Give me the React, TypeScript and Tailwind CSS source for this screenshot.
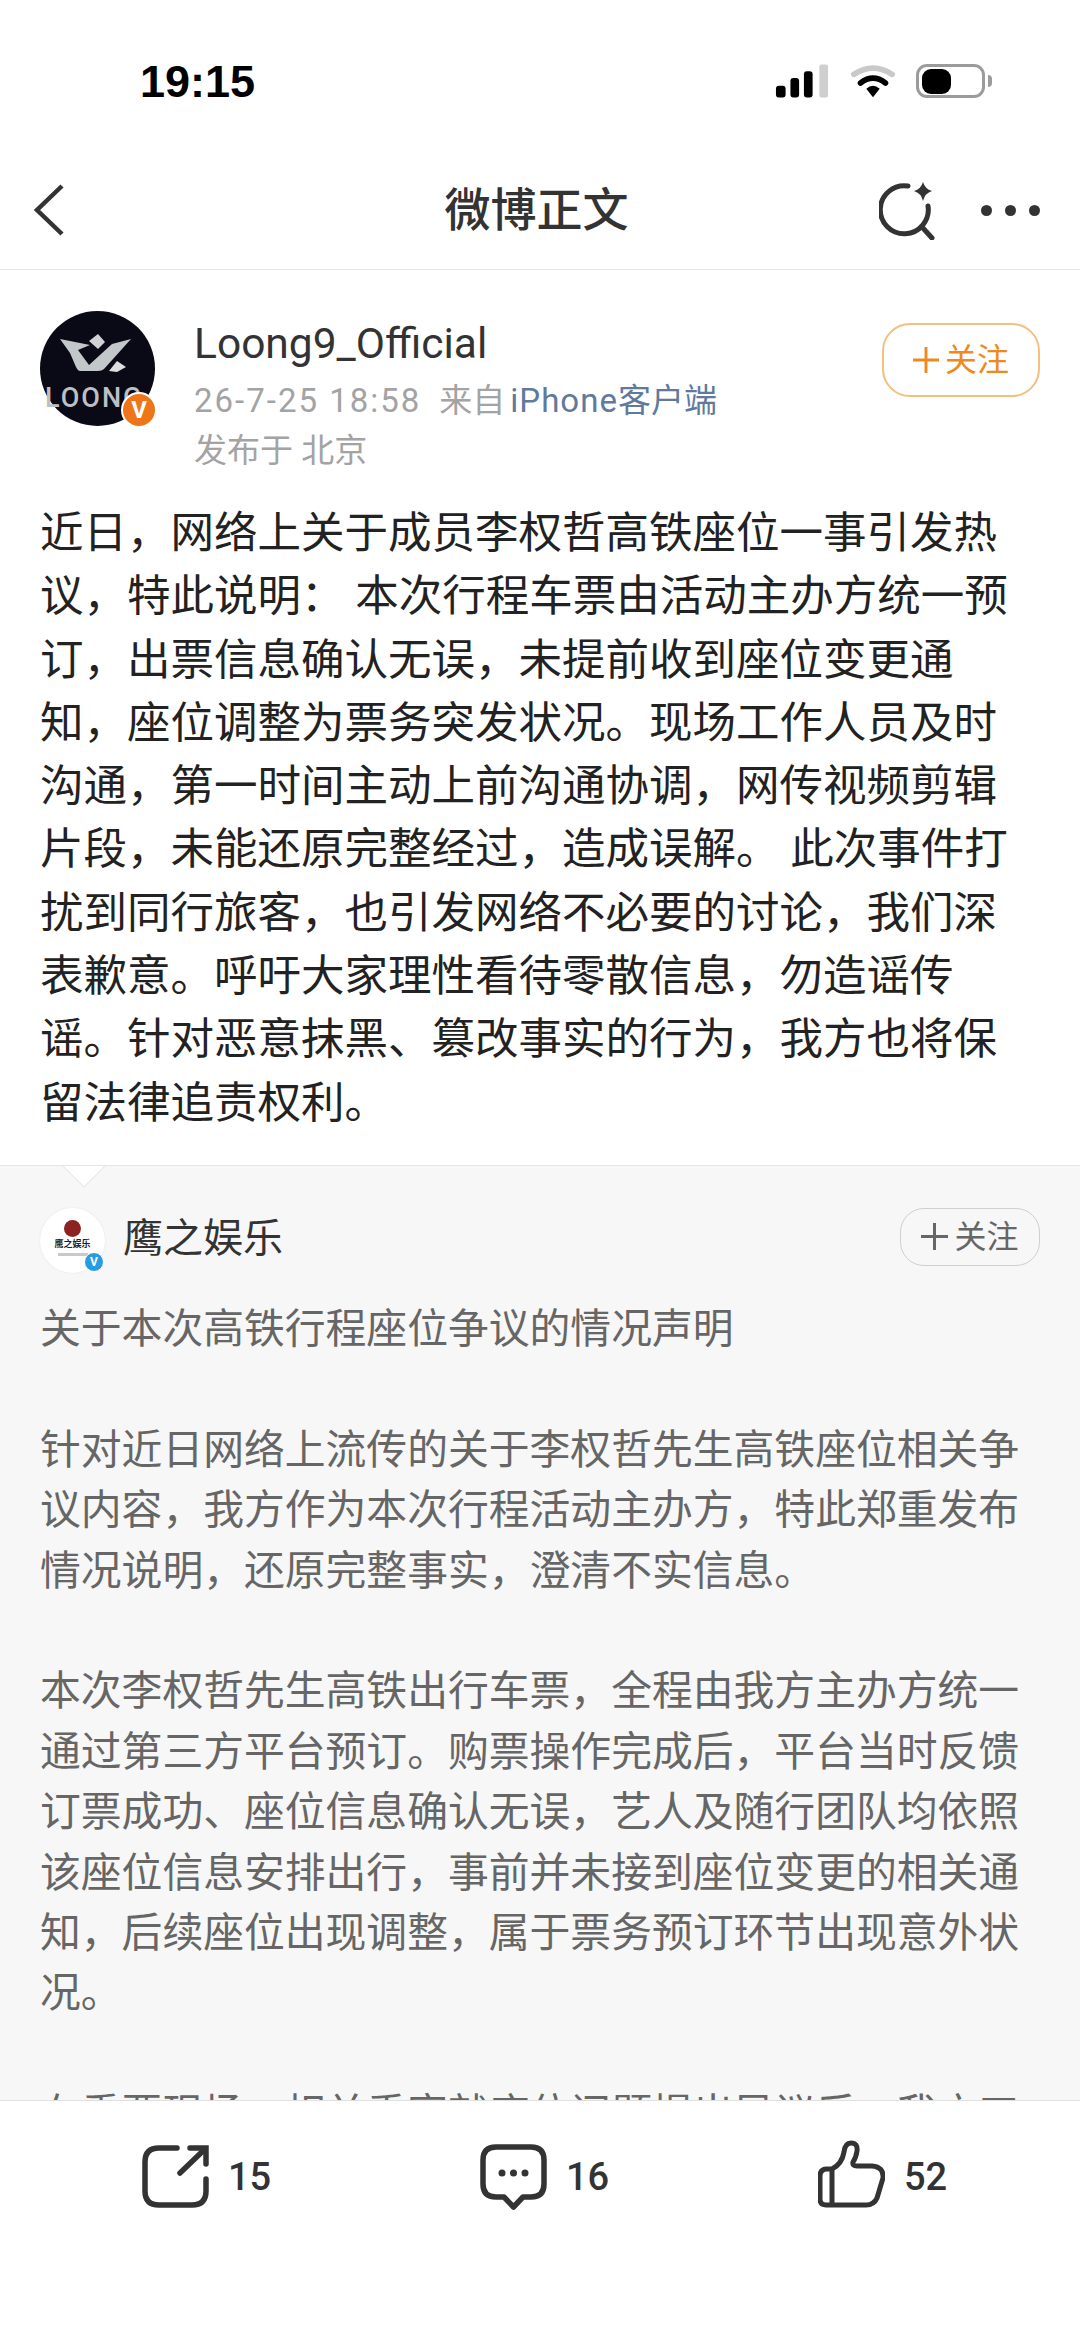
import { ReactNode } from 'react';

const postText = `近日，网络上关于成员李权哲高铁座位一事引发热
议，特此说明： 本次行程车票由活动主办方统一预
订，出票信息确认无误，未提前收到座位变更通
知，座位调整为票务突发状况。现场工作人员及时
沟通，第一时间主动上前沟通协调，网传视频剪辑
片段，未能还原完整经过，造成误解。 此次事件打
扰到同行旅客，也引发网络不必要的讨论，我们深
表歉意。呼吁大家理性看待零散信息，勿造谣传
谣。针对恶意抹黑、篡改事实的行为，我方也将保
留法律追责权利。`;

const quotedText = `关于本次高铁行程座位争议的情况声明

针对近日网络上流传的关于李权哲先生高铁座位相关争
议内容，我方作为本次行程活动主办方，特此郑重发布
情况说明，还原完整事实，澄清不实信息。

本次李权哲先生高铁出行车票，全程由我方主办方统一
通过第三方平台预订。购票操作完成后，平台当时反馈
订票成功、座位信息确认无误，艺人及随行团队均依照
该座位信息安排出行，事前并未接到座位变更的相关通
知，后续座位出现调整，属于票务预订环节出现意外状
况。

在重要现场，相关乘客就座位问题提出异议后，我方工`;

function StatusIcons() {
  return (
    <div className="flex items-center">
      <svg width="54" height="34" viewBox="0 0 56 34" fill="#000">
        <rect x="1" y="22" width="10" height="12" rx="3" />
        <rect x="16" y="14" width="9" height="20" rx="3" />
        <rect x="30" y="7" width="9" height="27" rx="3" />
        <rect x="46" y="0" width="9" height="34" rx="2" fill="#cfcfcf" />
      </svg>
      <svg className="ml-[22px]" width="44" height="34" viewBox="0 0 46 34" fill="none">
        <path d="M3 10Q23 -3 43 10" stroke="#c9c9c9" strokeWidth="6" strokeLinecap="round" />
        <path d="M10 19Q23 9 36 19" stroke="#000" strokeWidth="6" strokeLinecap="round" />
        <path d="M16 25Q23 19 30 25L23 34Z" fill="#000" />
      </svg>
      <div className="relative ml-[21px] flex h-[34px] w-[69px] items-center rounded-[11px] border-[3px] border-[#9b9b9b] pl-[3px]">
        <div className="h-[25px] w-[29px] rounded-[9px] bg-black" />
        <div className="absolute right-[-10px] h-[12px] w-[4px] rounded-r-full bg-[#9b9b9b]" />
      </div>
    </div>
  );
}

function PlusIcon({ color, size }: { color: string; size: number }) {
  return (
    <svg width={size} height={size} viewBox="0 0 27 27" fill="none" stroke={color} strokeWidth="3">
      <path d="M0 13.5H27M13.5 0V27" />
    </svg>
  );
}

function LoongAvatar() {
  return (
    <div className="relative h-[115px] w-[115px] shrink-0">
      <svg width="115" height="115" viewBox="0 0 115 115">
        <circle cx="57.5" cy="57.5" r="57.5" fill="#0a0a16" />
        <path d="M20 28L50 34L38 39L49 54L72 33L91 28L64 58Q62 60 58 60H40Q38 60 36 56L30 42Z" fill="#c2c7ca" />
        <path d="M58 23L65 31L58 38L49 30Z" fill="#cfd3d6" />
        <path d="M77 50L86 56L77 61L69 60Z" fill="#dcdfe0" />
        <text x="5" y="96" fontFamily="Roboto" fontSize="27" fontWeight="500" letterSpacing="2" fill="#bcc0c4">LOONG</text>
      </svg>
      <div className="absolute left-[81px] top-[81px] flex h-[36px] w-[36px] items-center justify-center rounded-full border-2 border-white bg-[#ee7518] text-[24px] leading-none font-bold text-white">
        V
      </div>
    </div>
  );
}

function EagleAvatar() {
  return (
    <div className="relative h-[65px] w-[65px] shrink-0">
      <div className="flex h-[65px] w-[65px] flex-col items-center rounded-full bg-white pt-[12px] shadow-[0_0_2px_#e0e0e0]">
        <div className="h-[17px] w-[17px] rounded-full bg-[#8c2320]" />
        <span className="mt-[2px] text-[9px] leading-[11px] font-bold text-[#222]">鹰之娱乐</span>
        <div className="mt-[3px] h-[3px] w-[30px] bg-[#c9c9c9]" />
      </div>
      <div className="absolute left-[44px] top-[44px] flex h-[20px] w-[20px] items-center justify-center rounded-full border border-white bg-[#2a9be0] text-[12px] leading-none font-bold text-white">
        V
      </div>
    </div>
  );
}

function Stat({ icon, count }: { icon: ReactNode; count: string }) {
  return (
    <div className="flex h-[63px] w-[338px] shrink-0 items-center">
      <div className="flex w-[67px] justify-center">{icon}</div>
      <span className="ml-[19px] text-[38px] leading-none font-medium text-[#333]">{count}</span>
    </div>
  );
}

export default function App() {
  return (
    <div className="flex h-[2341px] w-[1080px] flex-col overflow-hidden bg-white font-['Roboto','Noto_Sans_CJK_SC',sans-serif]">
      {/* status bar */}
      <div className="flex h-[162px] items-center justify-between pl-[140px] pr-[95px]">
        <span className="font-['Liberation_Sans'] text-[45px] leading-none font-bold text-black">19:15</span>
        <StatusIcons />
      </div>

      {/* nav */}
      <div className="flex h-[108px] items-center border-b border-[#e6e6e6] pb-[11px] pl-[33px] pr-[40px]">
        <div className="flex-1">
          <svg width="32" height="52" viewBox="0 0 32 52" fill="none">
            <path d="M29 2L4 26L29 50" stroke="#333" strokeWidth="4.5" />
          </svg>
        </div>
        <span className="text-[46px] leading-none font-medium text-[#333]">微博正文</span>
        <div className="flex flex-1 items-center justify-end">
          <svg width="58" height="60" viewBox="0 0 58 60" fill="none">
            <path d="M29 6A24 24 0 1 0 49 26" stroke="#333" strokeWidth="5" strokeLinecap="round" />
            <path d="M43 47L53 58" stroke="#333" strokeWidth="5" strokeLinecap="round" />
            <path d="M44 2Q46 9 53 11Q46 13 44 21Q42 13 35 11Q42 9 44 2Z" fill="#333" />
          </svg>
          <div className="ml-[44px] flex gap-[13px]">
            <div className="h-[11px] w-[11px] rounded-full bg-[#333]" />
            <div className="h-[11px] w-[11px] rounded-full bg-[#333]" />
            <div className="h-[11px] w-[11px] rounded-full bg-[#333]" />
          </div>
        </div>
      </div>

      {/* post */}
      <div className="px-[40px] pt-[41px] pb-[30px]">
        <div className="flex items-start">
          <LoongAvatar />
          <div className="ml-[39px] flex-1 pt-[8px]">
            <p className="text-[42.5px] leading-[50px] text-[#333]">Loong9_Official</p>
            <p className="mt-[7px] whitespace-pre text-[33px] leading-[50px] text-[#a3a3a3]">
              <span className="tracking-[2px]">26-7-25 18:58</span>
              <span className="ml-[18px]">来自</span>
              <span className="ml-[5px] text-[#5f7a9c]">
                <span className="tracking-[1px]">iPhone</span>客户端
              </span>
            </p>
            <p className="text-[33px] leading-[50px] text-[#a3a3a3]">发布于 北京</p>
          </div>
          <button className="mt-[12px] flex h-[74px] w-[158px] items-center justify-center gap-[6px] rounded-[28px] border-2 border-[#f3c07f] text-[32px] leading-none text-[#ee8a1d]">
            <PlusIcon color="#ee8a1d" size={26} />
            关注
          </button>
        </div>
        <p className="mt-[26px] whitespace-pre-line text-[43.5px] leading-[63.3px] text-[#222]">{postText}</p>
      </div>

      {/* quoted post */}
      <div className="relative flex-1 overflow-hidden border-t border-[#e6e6e6] bg-[#f7f7f7] px-[40px] pt-[42px]">
        <div className="absolute left-[68px] top-[-17px] h-[32px] w-[32px] rotate-45 border-r border-b border-[#e6e6e6] bg-white" />
        <div className="flex items-start">
          <EagleAvatar />
          <span className="ml-[18px] text-[40px] leading-[62px] text-[#333]">鹰之娱乐</span>
          <button className="ml-auto flex h-[58px] w-[140px] items-center justify-center gap-[6px] rounded-[24px] border border-[#cfcfcf] text-[32px] leading-none text-[#666]">
            <PlusIcon color="#666" size={27} />
            关注
          </button>
        </div>
        <p className="mt-[26px] whitespace-pre-line text-[40.8px] leading-[60.4px] text-[#666]">{quotedText}</p>
      </div>

      {/* bottom actions */}
      <div className="flex h-[241px] items-start border-t border-[#e0e0e0] bg-white pl-[142px] pt-[44px]">
        <Stat
          count="15"
          icon={
            <svg width="67" height="63" viewBox="0 0 67 63" fill="none" stroke="#333" strokeWidth="5.5" strokeLinecap="round">
              <path d="M35 3H17Q3 3 3 17V46Q3 60 17 60H50Q64 60 64 46V34" />
              <path d="M38 28L63 4" />
              <path d="M48 3H64V19" />
            </svg>
          }
        />
        <Stat
          count="16"
          icon={
            <svg width="67" height="66" viewBox="0 0 67 66" fill="none">
              <path d="M16 3H51Q64 3 64 16V40Q64 53 51 53H43L33.5 63L24 53H16Q3 53 3 40V16Q3 3 16 3Z" stroke="#333" strokeWidth="5.5" strokeLinejoin="round" />
              <circle cx="22" cy="29" r="3.5" fill="#333" />
              <circle cx="33.5" cy="29" r="3.5" fill="#333" />
              <circle cx="45" cy="29" r="3.5" fill="#333" />
            </svg>
          }
        />
        <Stat
          count="52"
          icon={
            <svg className="mt-[-6px]" width="67" height="68" viewBox="0 0 67 68" fill="none" stroke="#333" strokeWidth="5" strokeLinejoin="round">
              <path d="M14 29Q24 24 26 12Q27 3 33 3Q40 3 39 11Q38 18 35 22Q34 26 39 26H54Q66 27 65 38L59 58Q56 65 48 65H8Q2 65 2 59V36Q2 29 9 29H14V65" />
            </svg>
          }
        />
      </div>
    </div>
  );
}
